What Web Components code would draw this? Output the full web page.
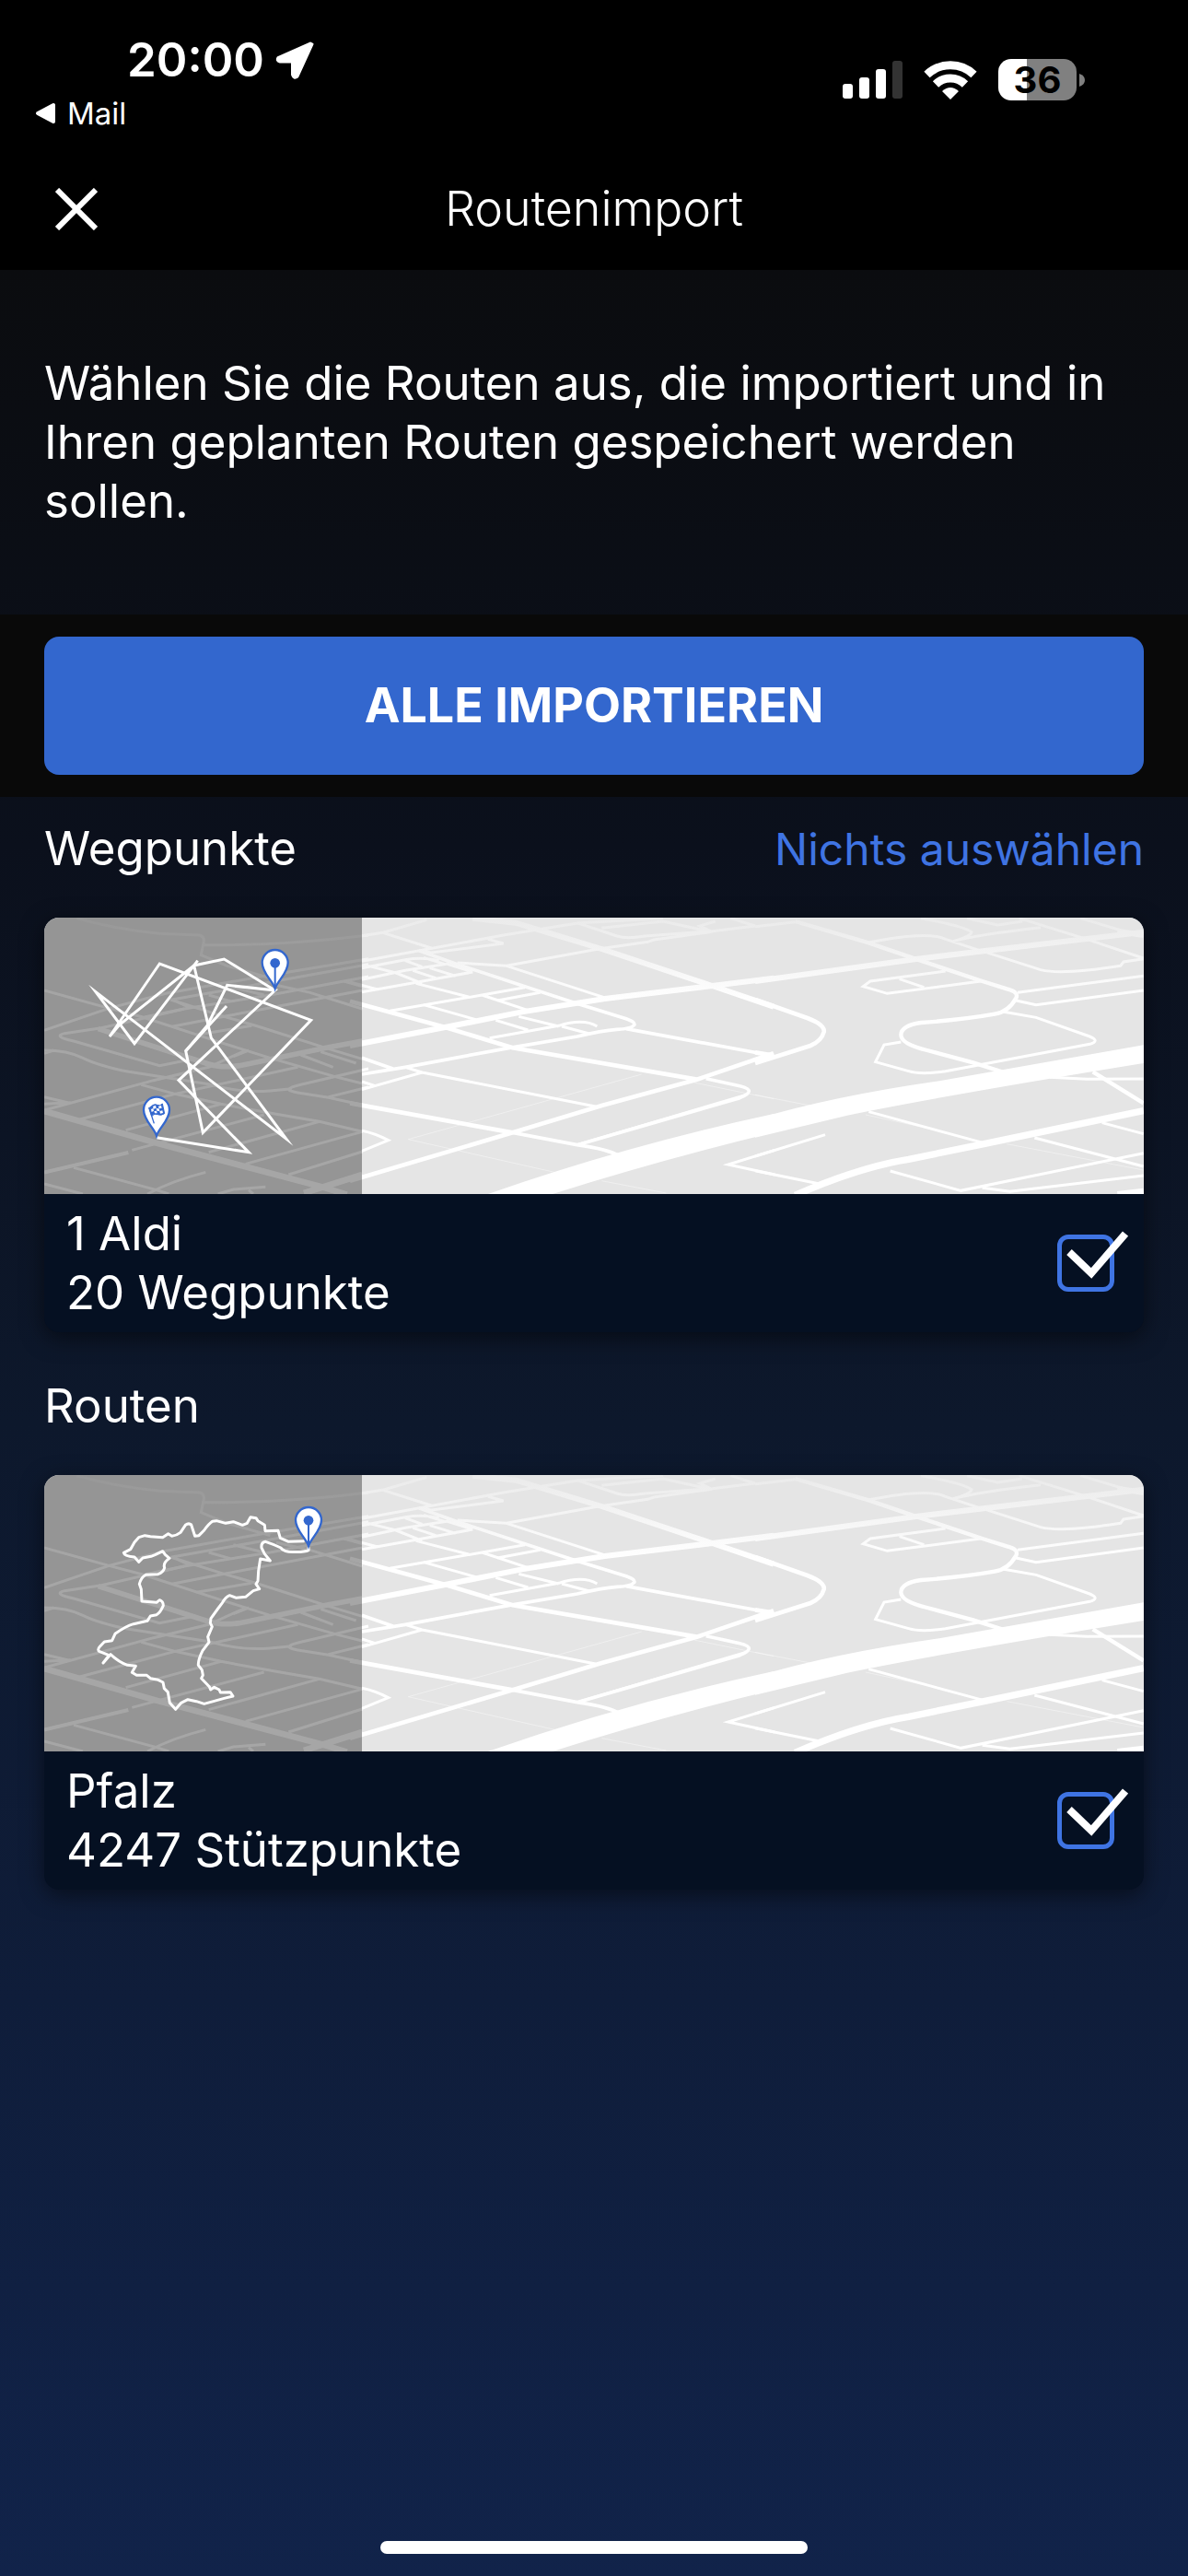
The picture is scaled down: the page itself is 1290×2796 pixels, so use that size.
<!DOCTYPE html>
<html lang="de">
<head>
<meta charset="utf-8">
<meta name="viewport" content="width=device-width, initial-scale=1">
<title>Routenimport</title>
<style>
  body {
    margin: 0;
    background: #000;
    color: #fff;
    font-family: Inter, "Liberation Sans", sans-serif;
    font-size: 51px;
    line-height: 64px;
  }
</style>
</head>
<body>
<import-page>
  <status-bar slot="top" time="20:00" back="Mail" battery="36"></status-bar>
  <nav-header slot="top">Routenimport</nav-header>

  <p slot="intro">Wählen Sie die Routen aus, die importiert und in Ihren geplanten Routen gespeichert werden sollen.</p>
  <action-bar slot="action">Alle importieren</action-bar>

  <route-section heading="Wegpunkte" action="Nichts auswählen">
    <route-card name="1 Aldi" detail="20 Wegpunkte" track="waypoints"></route-card>
  </route-section>
  <route-section heading="Routen">
    <route-card name="Pfalz" detail="4247 Stützpunkte" track="route"></route-card>
  </route-section>
</import-page>

<script>
class ImportPage extends HTMLElement {
  connectedCallback() {
    this.attachShadow({ mode: 'open' });
    this.shadowRoot.innerHTML = `
      <style>
        :host {
          display: flex;
          flex-direction: column;
          min-height: 100vh;
        }
        main {
          flex: 1;
          display: flex;
          flex-direction: column;
          background: linear-gradient(#0b0c0f, #0b101c 25%, #0d182c 50%, #0f1d3a 75%, #11234a);
        }
        .intro {
          padding: 91px 48px;
        }
        ::slotted(p) {
          margin: 0;
        }
        .home {
          width: 36%;
          height: 14px;
          margin: auto auto 24px;
          border-radius: 7px;
          background: #fff;
        }
      </style>
      <header><slot name="top"></slot></header>
      <main>
        <div class="intro"><slot name="intro"></slot></div>
        <slot name="action"></slot>
        <slot></slot>
        <div class="home"></div>
      </main>
    `;
  }
}
customElements.define('import-page', ImportPage);

class StatusBar extends HTMLElement {
  connectedCallback() {
    this.attachShadow({ mode: 'open' });
    this.shadowRoot.innerHTML = `
      <style>
        :host {
          display: flex;
          justify-content: space-between;
          height: 160px;
          box-sizing: border-box;
          padding: 35px 112px 0 38px;
        }
        .time {
          display: flex;
          align-items: center;
          gap: 12px;
          padding-left: 100px;
          font-size: 51px;
          font-weight: 600;
          line-height: 60px;
        }
        .back {
          display: flex;
          align-items: center;
          gap: 12px;
          margin-top: 8px;
          color: inherit;
          font-size: 33px;
          line-height: 40px;
          text-decoration: none;
        }
        .icons {
          display: flex;
          align-items: center;
          gap: 23px;
          height: 103px;
        }
        .battery {
          display: flex;
          align-items: center;
          gap: 3px;
        }
        .level {
          width: 85px;
          height: 45px;
          border-radius: 14px;
          background: linear-gradient(90deg, #fff 36%, #808080 36%);
          color: #000;
          font-size: 40px;
          font-weight: 700;
          line-height: 45px;
          text-align: center;
        }
      </style>
      <div>
        <div class="time">${this.getAttribute('time')}
          <svg width="42" height="42" viewBox="0 0 42 42"><path d="M38 3 L3 18.500 Q1 22 5 23 H18.500 V37 Q20 42 24 39 L40 4 Z" fill="#fff" stroke="#fff" stroke-width="3" stroke-linejoin="round"/></svg>
        </div>
        <a class="back" href="#mail">
          <svg width="23" height="24" viewBox="0 0 23 24"><path d="M3 12 L20 3 V21 Z" fill="#fff" stroke="#fff" stroke-width="4" stroke-linejoin="round"/></svg>
          ${this.getAttribute('back')}
        </a>
      </div>
      <div class="icons">
        <svg width="65" height="41" viewBox="0 0 65 41" fill="#fff">
          <rect y="25" width="11" height="16" rx="3"/>
          <rect x="18" y="18" width="11" height="23" rx="3"/>
          <rect x="36" y="9" width="11" height="32" rx="3"/>
          <rect x="54" width="11" height="41" rx="3" fill="#333"/>
        </svg>
        <svg width="58" height="42" viewBox="0 0 58 42">
          <path d="M3.500 15 A37 37 0 0 1 54.500 15" fill="none" stroke="#fff" stroke-width="9"/>
          <path d="M13 25.500 A23 23 0 0 1 45 25.500" fill="none" stroke="#fff" stroke-width="9"/>
          <path d="M20 33 Q29 25 38 33 L29 42 Z" fill="#fff"/>
        </svg>
        <div class="battery">
          <div class="level">${this.getAttribute('battery')}</div>
          <svg width="6" height="14" viewBox="0 0 6 14"><path d="M0 0 Q6 2 6 7 Q6 12 0 14 Z" fill="#808080"/></svg>
        </div>
      </div>
    `;
  }
}
customElements.define('status-bar', StatusBar);

class NavHeader extends HTMLElement {
  connectedCallback() {
    this.attachShadow({ mode: 'open' });
    this.shadowRoot.innerHTML = `
      <style>
        :host {
          display: grid;
          grid-template-columns: 120px 1fr 120px;
          align-items: center;
          height: 133px;
        }
        button {
          display: flex;
          justify-content: flex-end;
          width: 106px;
          padding: 0;
          border: 0;
          background: none;
        }
        h1 {
          margin: 0;
          font-size: 52px;
          font-weight: 300;
          text-align: center;
        }
      </style>
      <button aria-label="Schließen">
        <svg width="46" height="46" viewBox="0 0 46 46"><path d="M2 2 L44 44 M44 2 L2 44" stroke="#fff" stroke-width="6"/></svg>
      </button>
      <h1><slot></slot></h1>
    `;
  }
}
customElements.define('nav-header', NavHeader);

class ActionBar extends HTMLElement {
  connectedCallback() {
    this.attachShadow({ mode: 'open' });
    this.shadowRoot.innerHTML = `
      <style>
        :host {
          display: block;
          padding: 24px 48px;
          background: #090909;
        }
        button {
          display: block;
          width: 100%;
          height: 150px;
          border: 0;
          border-radius: 16px;
          background: #3367ce;
          color: #fff;
          font: inherit;
          font-size: 52px;
          font-weight: 700;
          text-transform: uppercase;
        }
      </style>
      <button><slot></slot></button>
    `;
  }
}
customElements.define('action-bar', ActionBar);

class RouteSection extends HTMLElement {
  connectedCallback() {
    const action = this.getAttribute('action');
    this.attachShadow({ mode: 'open' });
    this.shadowRoot.innerHTML = `
      <style>
        :host {
          display: block;
          padding: 24px 48px 0;
        }
        .head {
          display: flex;
          justify-content: space-between;
          align-items: baseline;
          height: 64px;
          margin-bottom: 43px;
        }
        h2 {
          margin: 0;
          font-size: 51px;
          font-weight: 400;
        }
        button {
          padding: 0;
          border: 0;
          background: none;
          color: #3f74e3;
          font: inherit;
          font-size: 48px;
        }
      </style>
      <div class="head">
        <h2>${this.getAttribute('heading')}</h2>
        ${action ? `<button>${action}</button>` : ''}
      </div>
      <slot></slot>
    `;
  }
}
customElements.define('route-section', RouteSection);

// Pin with its tip at 0,0
const pin = (x, y, mark) => `
  <g transform="translate(${x} ${y})">
    <path d="M0 -6 C-8 -32 -42 -56 -42 -90 A42 42 0 0 1 42 -90 C42 -56 8 -32 0 -6 Z" fill="#fff" stroke="#3367ce" stroke-width="7"/>
    ${mark}
  </g>`;

const startMark = '<circle cy="-89" r="16" fill="#3367ce"/><path d="M0 -80 V-8" stroke="#3367ce" stroke-width="6"/>';
const flagMark = `
  <path d="M-25 -98 L-8 -46" fill="none" stroke="#3367ce" stroke-width="4"/>
  <path d="M-24 -96 Q-8 -112 2 -106 Q12 -101 19 -110 L26 -78 Q14 -70 4 -75 Q-6 -80 -16 -70 Z" fill="#3367ce" stroke="#3367ce" stroke-width="3"/>
  <path d="M-12 -101 l9 -4 l2 9 l-9 3 Z M6 -102 l9 -2 l2 8 l-9 2 Z M-18 -92 l7 -3 l2 8 l-7 4 Z M-1 -95 l9 1 l2 8 l-9 -1 Z M-8 -86 l8 -1 l2 8 l-8 0 Z M10 -86 l9 -2 l2 8 l-9 2 Z" fill="#fff"/>`;

const tracks = {
  waypoints: `
    <g fill="none" stroke="#fff" stroke-width="9" stroke-miterlimit="12">
      <path d="M776 285 L610 183 L512 204 L270 396 L237 435 L400 198 L893 382 L541 748 L485 482 L618 336"/>
      <path d="M512 204 L568 440 L812 768 L192 290 L318 458 L524 188"/>
      <path d="M485 482 L555 400 L620 268 L776 285 L462 578 L690 812 L390 764"/>
    </g>
    ${pin(776, 285, startMark)}
    ${pin(390, 764, flagMark)}`,
  route: `
    <path transform="translate(0 15)" fill="none" stroke="#fff" stroke-width="9" stroke-linejoin="round" d="M885 268 V278 Q870 286 820 283 Q800 279 795 270 Q770 258 745 250 Q730 252 732 270 L742 290 L760 312 L728 306 L722 345 L720 378 L714 388 L725 404 L705 410 L680 430 L650 433 L628 425 Q615 430 605 448 L590 468 L567 500 L565 515 L571 527 L557 560 L561 577 L540 605 Q525 635 526 652 L538 668 L541 685 L536 695 L562 722 L566 732 L578 724 L594 732 L598 741 L630 740 L639 753 L610 760 L575 770 L545 778 L520 770 L492 764 L470 775 L452 796 L433 775 L427 740 L415 728 L411 708 L395 700 L370 695 L358 685 L325 685 L310 676 L322 655 L295 652 Q268 643 240 617 L216 645 L235 620 L205 608 Q195 603 205 592 L220 576 L245 572 L255 550 Q290 525 315 518 L360 508 L370 492 L390 488 Q402 482 412 458 Q412 445 400 440 L390 448 L342 444 L340 405 L334 388 Q340 365 355 358 L395 356 Q412 350 416 335 Q410 320 432 304 L418 292 L410 281 L385 293 L372 298 L345 303 L332 316 L318 300 Q285 298 283 286 L305 275 L318 252 L332 236 L352 230 L370 233 L410 236 L428 224 L440 232 Q455 230 468 220 L484 196 Q495 188 503 195 L515 232 L528 230 L545 213 Q560 192 572 184 L585 182 L615 190 L640 185 L670 196 L685 190 L696 170 L714 173 L720 182 L742 196 L744 215 L786 214 L793 238 L820 250 L872 248"/>
    ${pin(885, 285, startMark)}`
};

class StreetMap extends HTMLElement {
  connectedCallback() {
    this.attachShadow({ mode: 'open' });
    this.shadowRoot.innerHTML = `
      <style>
        :host {
          display: block;
        }
        svg {
          display: block;
          width: 100%;
          height: 300px;
        }
      </style>
      <svg viewBox="0 0 3582 900" preserveAspectRatio="xMinYMin slice" aria-hidden="true">
        <defs>
          <linearGradient id="haze" x2="0" y2="1">
            <stop offset="0" stop-color="#e5e5e5" stop-opacity=".8"/>
            <stop offset="1" stop-color="#e5e5e5" stop-opacity="0"/>
          </linearGradient>
        </defs>
        <rect width="3582" height="900" fill="#e5e5e5"/>
        <!-- west -->
        <g transform="translate(-24 -48)" fill="none" stroke="#fff" stroke-width="9">
          <path d="M130 50 Q250 85 400 100 L530 105 Q548 110 543 130 L535 170 L620 205 L760 245 M545 137 Q800 140 1080 105"/>
          <path d="M24 285 L235 343 L345 372 L600 455 L760 505 L980 568 L1060 588 M24 415 L235 343 L420 295 L730 240 L1080 182"/>
          <path d="M440 315 L740 262 L1080 200 M435 315 L610 370 L720 402 L950 475 L1060 508 M440 315 L500 342"/>
          <path d="M500 510 L400 530 L120 450 Q50 435 90 425 L210 407 L480 345 L760 300 L1080 240"/>
          <path d="M24 480 Q100 480 150 505 Q200 530 300 550 L560 590 Q660 620 760 612 L830 605 M24 490 L55 480"/>
          <path d="M1080 540 L860 592 Q790 608 850 618 L950 634 L1080 662 M950 632 L1080 600"/>
          <path d="M24 675 L380 578 L560 535 L680 480 M24 632 L100 650 M140 705 L450 622 L850 535 M24 655 L110 650"/>
          <path d="M340 592 L450 622 L600 655 L780 688 L920 712 L1060 745 M290 740 L600 655 M310 805 L740 690"/>
          <path d="M120 862 L390 935 L430 948 M24 915 L150 948 M360 948 Q440 905 550 877 M560 812 L920 712"/>
          <path d="M680 850 L1060 745 M820 885 L1060 810 M590 948 L640 933 L745 925 M690 935 L705 948"/>
          <path d="M440 403 L610 370 L1060 285 M520 430 L700 400 M560 300 L630 320 M640 275 L740 300 M780 268 L890 292 L1060 345 M1000 255 L1060 272"/>
          <path d="M350 372 L480 345 M860 495 L965 535 M925 485 L1040 522 M640 500 L690 480"/>
          <path d="M24 878 L298 813" stroke-width="12"/>
          <path d="M200 410 L420 480 L560 525 Q600 538 660 530 L950 470 L1060 450" stroke-width="17"/>
          <path d="M24 678 L400 785 L930 925 L1010 950 M870 945 L1060 885" stroke-width="20"/>
        </g>
        <!-- centre -->
        <g transform="translate(996 -48)" fill="none" stroke="#fff" stroke-width="9">
          <path d="M39 107 L110 96 L250 55 M110 98 L265 147 M39 190 L500 105 L745 65 L1020 50 M225 155 L265 162 L500 132 L450 118"/>
          <path d="M740 65 L870 108 Q900 118 960 108 L1180 92 L1320 75 M820 82 L1020 60 L1180 95 M1180 95 L1140 75 L1190 60 M1240 50 L1320 75 M350 195 L510 205 L810 150 L970 127 L990 120 L1180 94"/>
          <path d="M510 205 L835 310 M39 212 L180 185 Q240 175 290 188 M60 205 L150 228 M39 250 L180 220 L320 198 M180 188 L235 208 M240 178 L310 200 M39 290 L220 258 L400 225 M0 258 L90 282 M150 228 L235 262 M205 220 L280 245 M260 212 L345 238 M315 198 L400 225"/>
          <path d="M130 352 L430 300 L570 275 M215 262 L390 307 M240 332 L410 380 M430 300 L580 350 M480 318 L620 292 M475 382 L580 414 M550 370 L680 402 M455 440 L680 400 Q760 375 805 402 M690 402 L780 426"/>
          <path d="M180 535 L235 552 L800 663 M39 608 L235 552 M39 582 L80 595 M39 742 Q80 750 125 773 L39 808 M740 788 L1290 625 M1384 805 L1232 852 L1384 885"/>
          <path d="M225 155 L350 200 L730 325 L890 374 Q932 387 926 398 Q915 411 870 412 Q820 416 740 435 L520 472 L180 535 L39 558 M900 410 L1380 498 M39 505 L140 540 M1160 572 L1270 596 Q1330 610 1270 635 L740 788 M530 748 L740 788 Q840 802 880 825" stroke-width="11"/>
          <path d="M0 320 L310 405 L530 472 L1130 575 M0 652 L530 748 M0 905 L530 748 L820 660 L1130 575 L1380 490" stroke-width="14"/>
          <path d="M0 465 L310 405 L560 355 L830 312 L1180 270 L1380 245 M400 50 L540 65 L820 150 L1180 270 L1380 338" stroke-width="18"/>
          <path d="M950 558 L190 770 L680 880 M1120 585 L1380 638 M820 905 L1030 945" stroke-width="3" opacity=".4"/>
          <path d="M450 948 Q900 790 1380 687 L1380 748 Q1000 840 660 948 Z" fill="#fff" stroke="none"/>
        </g>
        <!-- east -->
        <g transform="translate(2316 -48)" fill="none" stroke="#fff" stroke-width="9">
          <path d="M0 77 L130 62 M365 130 Q560 90 620 118 L740 158 M645 125 Q730 102 930 80 M540 50 Q680 75 705 95 Q700 110 645 125 M690 50 L790 72 L870 60 M860 50 L1080 118 L1265 180 M1060 50 L1210 95"/>
          <path d="M750 160 L930 218 Q1000 235 1190 205 L1200 192 L1265 182 M620 222 L375 255 L352 272 L430 295 L735 255 M470 248 L550 275 M855 292 L1265 238 M850 318 L915 332 L1265 285"/>
          <path d="M810 355 L915 373 L1090 435 Q1125 450 1090 460 L620 548 Q540 560 500 548 L392 518 L420 462 L475 453 M960 568 L1080 574 L1265 573"/>
          <path d="M370 680 L745 782 M440 873 L670 937 L1265 815 M740 928 L830 940 L1265 888 M910 765 L1265 858 M1130 716 L1265 752 M0 825 L228 755 M0 872 L210 915"/>
          <path d="M0 315 L170 375 Q228 397 224 420 Q216 450 180 465 L0 522 M0 487 L60 497" stroke-width="14"/>
          <path d="M130 60 L370 130 L530 185 L740 255 L820 280 Q860 290 850 310 Q825 355 780 362 Q680 380 540 390 Q475 400 475 430 Q475 460 560 480 L710 520 L820 555 M1100 550 L1265 652" stroke-width="13"/>
          <path d="M0 255 L530 182 L1265 95 M1180 948 L1265 938 M1180 92 L1265 105" stroke-width="18"/>
          <path d="M130 952 Q340 860 500 835 L745 785 L1265 677" stroke-width="22"/>
          <path d="M0 625 L180 660 M360 690 L600 742 M820 785 L1265 870" stroke-width="3" opacity=".4"/>
          <path d="M0 705 Q250 630 600 580 L1265 463 V522 Q600 630 300 692 L0 764 Z" fill="#fff" stroke="none"/>
        </g>
        <rect width="3582" height="270" fill="url(#haze)"/>
        <rect width="1035" height="900" fill="#000" fill-opacity=".35"/>
        <g transform="translate(-24 -48)">${tracks[this.getAttribute('track')]}</g>
      </svg>
    `;
  }
}
customElements.define('street-map', StreetMap);

class RouteCard extends HTMLElement {
  connectedCallback() {
    this.attachShadow({ mode: 'open' });
    this.shadowRoot.innerHTML = `
      <style>
        :host {
          display: block;
          margin-bottom: 24px;
          border-radius: 16px;
          background: #051022;
          box-shadow: 0 6px 24px rgba(0, 0, 0, 0.5);
          overflow: hidden;
        }
        label {
          display: flex;
          justify-content: space-between;
          align-items: center;
          height: 150px;
          padding: 0 32px 0 24px;
        }
        .name, .detail {
          display: block;
        }
        .check {
          position: relative;
          width: 62px;
          height: 62px;
        }
        input {
          appearance: none;
          display: block;
          width: 62px;
          height: 62px;
          margin: 0;
          border: 5px solid #3f74e3;
          border-radius: 12px;
        }
        .tick {
          position: absolute;
          left: 9px;
          top: -4px;
          pointer-events: none;
        }
        input:not(:checked) + .tick {
          display: none;
        }
      </style>
      <street-map track="${this.getAttribute('track')}"></street-map>
      <label>
        <span>
          <span class="name">${this.getAttribute('name')}</span>
          <span class="detail">${this.getAttribute('detail')}</span>
        </span>
        <span class="check">
          <input type="checkbox" checked>
          <svg class="tick" width="68" height="52" viewBox="0 0 68 52"><path d="M4 23 L28 46 L65 3" fill="none" stroke="#fff" stroke-width="8"/></svg>
        </span>
      </label>
    `;
  }
}
customElements.define('route-card', RouteCard);
</script>
</body>
</html>
